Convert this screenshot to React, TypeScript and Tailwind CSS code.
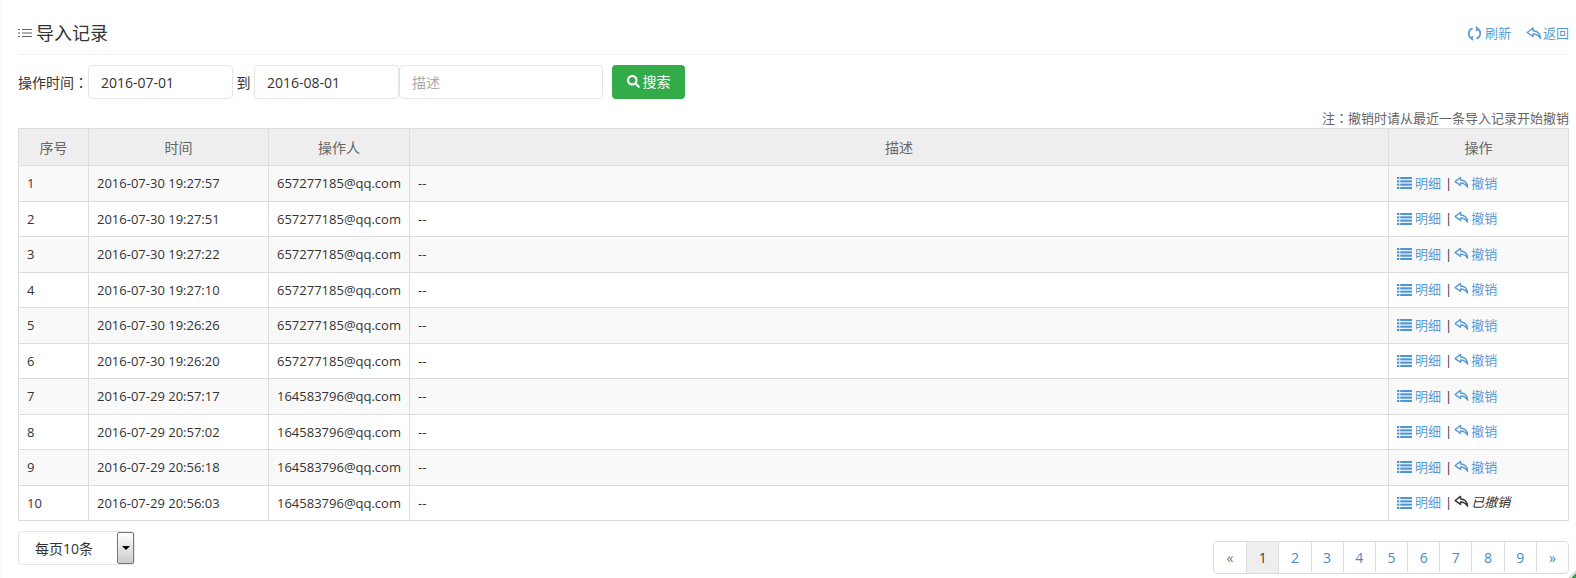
import React from "react";
import { FaSearch } from "react-icons/fa";

const font = "font-['Open_Sans','Noto_Sans_CJK_SC',sans-serif]";
const colon = "font-['Noto_Sans_CJK_TC',sans-serif]";

function ReplyIcon({ className }: { className?: string }) {
  return (
    <svg viewBox="0 0 16 13" className={className} fill="none" stroke="currentColor" strokeWidth="1.5" strokeLinejoin="round">
      <path d="M7 1 1.2 5.5 7 9.5V7c3.2 0 5.5.8 7.5 4.5C14.5 7 11.5 3.8 7 3.8z" />
    </svg>
  );
}

function RefreshIcon({ className }: { className?: string }) {
  return (
    <svg viewBox="0 0 16 16" className={className} fill="none" stroke="currentColor" strokeWidth="1.8">
      <path d="M6 2.6A5.7 5.7 0 0 0 4.6 13" />
      <path d="M10 13.4A5.7 5.7 0 0 0 11.4 3" />
      <path d="M9.5 1 11.6 3.1 9.5 5" />
      <path d="M6.5 15 4.4 12.9 6.5 11" />
    </svg>
  );
}

function TitleListIcon() {
  return (
    <svg viewBox="0 0 14 10" className="h-[10px] w-[14px] text-[#666]" fill="none" stroke="currentColor" strokeWidth="1">
      <path d="M0 1.5h2M0 5h2M0 8.5h2M4 1.5h10M4 5h10M4 8.5h10" />
    </svg>
  );
}

function ListIcon() {
  return (
    <svg viewBox="0 0 15 12" className="h-[12px] w-[15px] text-[#4f94d4]" fill="currentColor">
      {[0, 3.3, 6.6, 9.9].map((y) => (
        <g key={y}>
          <rect x="0" y={y} width="2.4" height="2.1" />
          <rect x="3.2" y={y} width="11.8" height="2.1" />
        </g>
      ))}
    </svg>
  );
}

const rows = [
  ["1", "2016-07-30 19:27:57", "657277185@qq.com"],
  ["2", "2016-07-30 19:27:51", "657277185@qq.com"],
  ["3", "2016-07-30 19:27:22", "657277185@qq.com"],
  ["4", "2016-07-30 19:27:10", "657277185@qq.com"],
  ["5", "2016-07-30 19:26:26", "657277185@qq.com"],
  ["6", "2016-07-30 19:26:20", "657277185@qq.com"],
  ["7", "2016-07-29 20:57:17", "164583796@qq.com"],
  ["8", "2016-07-29 20:57:02", "164583796@qq.com"],
  ["9", "2016-07-29 20:56:18", "164583796@qq.com"],
  ["10", "2016-07-29 20:56:03", "164583796@qq.com"],
];

const pages = ["«", "1", "2", "3", "4", "5", "6", "7", "8", "9", "»"];

export default function App() {
  return (
    <div className={`${font} relative h-[578px] w-[1576px] overflow-hidden border-l-2 border-[#fafafa] bg-white pl-[16px] pr-[7px] text-[13px] leading-[19px] text-[#333]`}>
      <div className="flex h-[55px] items-end justify-between border-b border-[#eee] pb-[9px]">
        <div className="flex items-center gap-[4px] text-[#333]">
          <TitleListIcon />
          <span className="text-[18px] leading-[24px]">导入记录</span>
        </div>
        <div className="flex items-center gap-[15px] pb-[2px] text-[#5b9bd5]">
          <a className="flex items-center gap-[3px]"><RefreshIcon className="h-[15px] w-[15px]" />刷新</a>
          <a className="flex items-center gap-[1px]"><ReplyIcon className="h-[13px] w-[16px]" />返回</a>
        </div>
      </div>

      <div className="mt-[10px] flex h-[34px] items-center text-[14px]">
        <span className="w-[70px] text-[14px] whitespace-nowrap">操作时间<span className={colon}>：</span></span>
        <input readOnly value="2016-07-01" className="h-[34px] w-[145px] rounded-[4px] border border-[#e5e5e5] px-[12px] text-[#333] outline-none" />
        <span className="w-[21px] text-center">到</span>
        <input readOnly value="2016-08-01" className="h-[34px] w-[145px] rounded-[4px] border border-[#e5e5e5] px-[12px] text-[#333] outline-none" />
        <input readOnly placeholder="描述" className="h-[34px] w-[204px] rounded-[4px] border border-[#e5e5e5] px-[12px] outline-none placeholder:text-[#aaa]" />
        <button className="ml-[9px] flex h-[34px] w-[73px] items-center justify-center gap-[3px] rounded-[4px] bg-[#34ab49] pb-[1px] text-white">
          <FaSearch className="h-[13px] w-[13px]" />搜索
        </button>
      </div>

      <div className="mt-[9px] h-[20px] text-right text-[#666]"><span>注<span className={colon}>：</span>撤销时请从最近一条导入记录开始撤销</span></div>

      <table className="w-[1551px] table-fixed border-collapse border border-[#ddd] text-[13px]">
        <colgroup>
          <col className="w-[70px]" />
          <col className="w-[180px]" />
          <col className="w-[141px]" />
          <col />
          <col className="w-[180px]" />
        </colgroup>
        <thead>
          <tr className="h-[37px] bg-[#eee] text-[#666]">
            {["序号", "时间", "操作人", "描述", "操作"].map((h) => (
              <th key={h} className="border border-[#ddd] text-center text-[14px] font-normal">{h}</th>
            ))}
          </tr>
        </thead>
        <tbody>
          {rows.map((r, i) => (
            <tr key={r[0]} className={`h-[35.5px] ${i % 2 === 0 ? "bg-[#f9f9f9]" : "bg-white"}`}>
              <td className="border border-[#ddd] px-[8px] pt-[1px]">{r[0]}</td>
              <td className="border border-[#ddd] px-[8px] pt-[1px]">{r[1]}</td>
              <td className="border border-[#ddd] px-[8px] pt-[1px] whitespace-nowrap">{r[2]}</td>
              <td className="border border-[#ddd] px-[8px] pt-[1px]">--</td>
              <td className="border border-[#ddd] px-[8px] pt-[1px] whitespace-nowrap">
                <span className="inline-flex items-center">
                  <span className="inline-flex items-center gap-[3px]">
                    <ListIcon />
                    <span className="text-[#5b9bd5]">明细</span>
                  </span>
                  <span className="ml-[4px] mr-[2px]">|</span>
                  {i === 9 ? (
                    <span className="inline-flex items-center gap-[2px] italic text-[#333]">
                      <ReplyIcon className="mb-[2px] h-[13px] w-[15px]" />已撤销
                    </span>
                  ) : (
                    <span className="inline-flex items-center gap-[2px] text-[#5b9bd5]">
                      <ReplyIcon className="mb-[2px] h-[13px] w-[15px]" />撤销
                    </span>
                  )}
                </span>
              </td>
            </tr>
          ))}
        </tbody>
      </table>

      <div className="mt-[10px] flex items-start justify-between">
        <div className="flex h-[34px] w-[117px] items-center justify-between rounded-[4px] border border-[#e5e5e5] pl-[16px] text-[14px]">
          <span>每页10条</span>
          <span className="flex h-[32px] w-[17px] items-center justify-center rounded-[2px] border border-[#777] bg-linear-to-b from-white to-[#ccc]">
            <span className="h-0 w-0 border-x-[4px] border-t-[4px] border-x-transparent border-t-black" />
          </span>
        </div>
        <div className="mt-[10px] flex h-[33px] overflow-hidden rounded-[4px] border border-[#ddd] text-[14px]">
          {pages.map((p, i) => (
            <span
              key={p}
              className={`flex w-[32.2px] items-center justify-center ${i > 0 ? "border-l border-[#ddd]" : ""} ${
                p === "1" ? "bg-[#eee] text-[#444]" : i === 0 ? "text-[#777]" : "text-[#428bca]"
              }`}
            >
              {p}
            </span>
          ))}
        </div>
      </div>

      <svg viewBox="0 0 8 8" className="absolute bottom-0 right-0 h-[8px] w-[8px]">
        <path d="M3 8 8 3V8z" fill="#3a9a4f" />
        <path d="M1 8 8 1" stroke="#bbb" strokeWidth="1" />
      </svg>
    </div>
  );
}
